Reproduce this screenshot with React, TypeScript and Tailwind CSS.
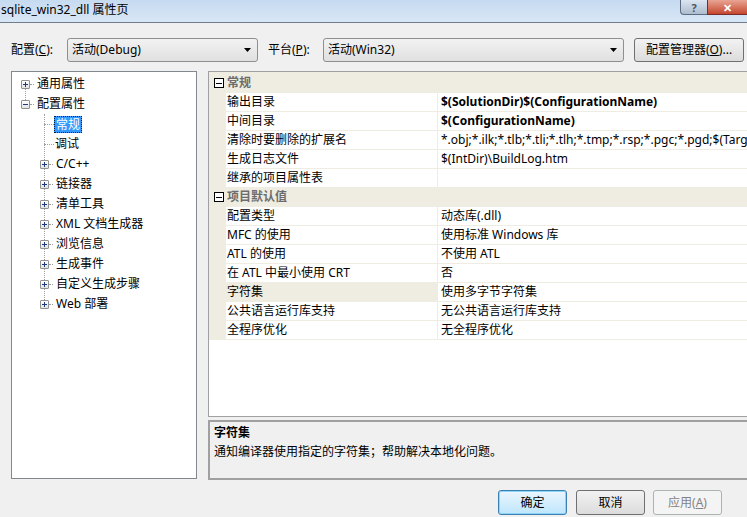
import React from 'react';

const FONT = { fontFamily: '"Noto Sans", "Noto Sans CJK SC", sans-serif' };

/* ------------------------------------------------------------------ */
/* Small pieces                                                        */
/* ------------------------------------------------------------------ */
function TreeBox({ open }: { open?: boolean }) {
  return (
    <span className="relative grid h-[9px] w-[9px] shrink-0 place-items-center rounded-[1px] border border-[#919191] bg-gradient-to-b from-white to-[#e2e2e2]">
      <span className="absolute h-px w-[5px] bg-[#1c3a7a]" />
      {!open && <span className="absolute h-[5px] w-px bg-[#1c3a7a]" />}
    </span>
  );
}

function GridBox() {
  return (
    <span className="relative grid h-[10px] w-[10px] place-items-center border border-black bg-white">
      <span className="h-px w-[6px] bg-black" />
    </span>
  );
}

function DropArrow() {
  return (
    <svg width="7" height="4" viewBox="0 0 7 4" className="shrink-0">
      <path d="M0 0h7L3.5 4z" fill="#000" />
    </svg>
  );
}

function Combo({ text, width }: { text: string; width: string }) {
  return (
    <div
      className={`flex h-[24px] ${width} items-center justify-between rounded-[3px] border border-[#8e8f8f] bg-gradient-to-b from-[#f2f2f2] to-[#e0e0e0] pl-[4px] pr-[6px] text-[12px] text-black`}
    >
      <span>{text}</span>
      <DropArrow />
    </div>
  );
}

/* ------------------------------------------------------------------ */
/* Tree                                                                */
/* ------------------------------------------------------------------ */
const children: { label: string; expandable: boolean; selected?: boolean }[] = [
  { label: '常规', expandable: false, selected: true },
  { label: '调试', expandable: false },
  { label: 'C/C++', expandable: true },
  { label: '链接器', expandable: true },
  { label: '清单工具', expandable: true },
  { label: 'XML 文档生成器', expandable: true },
  { label: '浏览信息', expandable: true },
  { label: '生成事件', expandable: true },
  { label: '自定义生成步骤', expandable: true },
  { label: 'Web 部署', expandable: true },
];

function Tree() {
  return (
    <div className="h-[408px] w-[186px] shrink-0 border border-[#828790] bg-white pt-[2px] text-[12px] text-black">
      <div className="relative">
        {/* link between the two top-level boxes */}
        <span className="absolute left-[13px] top-[15px] h-[11px] border-l border-dotted border-[#a0a0a0]" />
        <div className="flex h-[20px] items-center pl-[9px]">
          <TreeBox />
          <span className="w-[4px] border-t border-dotted border-[#a0a0a0]" />
          <span className="ml-[3px]">通用属性</span>
        </div>
        <div className="flex h-[20px] items-center pl-[9px]">
          <TreeBox open />
          <span className="w-[4px] border-t border-dotted border-[#a0a0a0]" />
          <span className="ml-[3px]">配置属性</span>
        </div>
      </div>

      <div className="relative">
        <span className="absolute left-[32px] top-0 bottom-[10px] border-l border-dotted border-[#a0a0a0]" />
        {children.map((c) => (
          <div key={c.label} className="flex h-[20px] items-center pl-[28px]">
            {c.expandable ? (
              <>
                <TreeBox />
                <span className="w-[4px] border-t border-dotted border-[#a0a0a0]" />
                <span className="ml-[3px]">{c.label}</span>
              </>
            ) : (
              <>
                <span className="ml-[4px] w-[10px] border-t border-dotted border-[#a0a0a0]" />
                <span
                  className={
                    c.selected
                      ? 'border border-dotted border-[#10203a] bg-[#3399ff] px-px leading-[15px] text-white'
                      : 'ml-[1px]'
                  }
                >
                  {c.label}
                </span>
              </>
            )}
          </div>
        ))}
      </div>
    </div>
  );
}

/* ------------------------------------------------------------------ */
/* Property grid                                                       */
/* ------------------------------------------------------------------ */
type Row = { name: string; value: string; bold?: boolean; picked?: boolean };
const sections: { title: string; rows: Row[] }[] = [
  {
    title: '常规',
    rows: [
      { name: '输出目录', value: '$(SolutionDir)$(ConfigurationName)', bold: true },
      { name: '中间目录', value: '$(ConfigurationName)', bold: true },
      {
        name: '清除时要删除的扩展名',
        value: '*.obj;*.ilk;*.tlb;*.tli;*.tlh;*.tmp;*.rsp;*.pgc;*.pgd;$(TargetPath)',
      },
      { name: '生成日志文件', value: '$(IntDir)\\BuildLog.htm' },
      { name: '继承的项目属性表', value: '' },
    ],
  },
  {
    title: '项目默认值',
    rows: [
      { name: '配置类型', value: '动态库(.dll)' },
      { name: 'MFC 的使用', value: '使用标准 Windows 库' },
      { name: 'ATL 的使用', value: '不使用 ATL' },
      { name: '在 ATL 中最小使用 CRT', value: '否' },
      { name: '字符集', value: '使用多字节字符集', picked: true },
      { name: '公共语言运行库支持', value: '无公共语言运行库支持' },
      { name: '全程序优化', value: '无全程序优化' },
    ],
  },
];

function PropertyGrid() {
  return (
    <div className="h-[346px] overflow-hidden border-y border-l border-[#a0a0a0] bg-white text-[12px] text-black">
      {sections.map((s, i) => (
        <div key={s.title}>
          <div
            className={`flex items-center border-b border-[#efece1] bg-[#efece1] ${
              i === 0 ? 'h-[21px] pt-[2px]' : 'h-[19px]'
            }`}
          >
            <span className="flex w-[17px] justify-center pl-[2px]">
              <GridBox />
            </span>
            <span className="pl-[1px] font-bold text-[#6d6d6d]">{s.title}</span>
          </div>
          {s.rows.map((r) => (
            <div key={r.name} className="flex h-[19px]">
              <span className="w-[17px] shrink-0 bg-[#efece1]" />
              <span
                className={`flex w-[212px] shrink-0 items-center border-b border-r border-[#efece1] pl-[1px] ${
                  r.picked ? 'bg-[#efece1]' : ''
                }`}
              >
                {r.name}
              </span>
              <span
                className={`flex flex-1 items-center overflow-hidden whitespace-nowrap border-b border-[#efece1] pl-[3px] ${
                  r.bold ? 'font-bold' : ''
                }`}
              >
                {r.value}
              </span>
            </div>
          ))}
        </div>
      ))}
    </div>
  );
}

function Description() {
  return (
    <div className="mt-[3px] h-[60px] border-y-2 border-l-2 border-[#a0a0a0] bg-[#f0f0f0] pl-[4px] pt-[1px] text-[12px] leading-[19px] text-black">
      <div className="font-bold">字符集</div>
      <div>通知编译器使用指定的字符集；帮助解决本地化问题。</div>
    </div>
  );
}

/* ------------------------------------------------------------------ */
/* Dialog                                                              */
/* ------------------------------------------------------------------ */
export default function App() {
  return (
    <div className="h-[517px] w-[747px] overflow-hidden bg-[#f0f0f0]" style={FONT}>
      {/* Title bar */}
      <div className="flex h-[23px] items-start justify-between border-b border-[#6e7c8b] bg-gradient-to-b from-[#c6daf0] to-[#d9e7f6]">
        <span className="pl-px pt-[2px] text-[12px] leading-[16px] text-black">sqlite_win32_dll 属性页</span>
        <div className="flex">
          <span className="flex h-[15px] w-[27px] items-center justify-center rounded-bl-[4px] border-b border-l border-[#5d6c80] bg-gradient-to-b from-[#dce6f2] to-[#aebccd] text-[11px] font-bold leading-none text-[#4a5564]">
            ?
          </span>
          <span className="flex h-[15px] w-[40px] items-center justify-center border-b border-l border-[#7a2b2b] bg-gradient-to-b from-[#e8a493] to-[#c4442c] text-[11px] font-bold leading-none text-white">
            ✕
          </span>
        </div>
      </div>

      {/* Configuration row */}
      <div className="flex items-center pl-[11px] pt-[15px] text-[12px] text-black">
        <span className="w-[56px]">
          配置(<span className="underline">C</span>):
        </span>
        <Combo text="活动(Debug)" width="w-[191px]" />
        <span className="ml-[10px] w-[55px]">
          平台(<span className="underline">P</span>):
        </span>
        <Combo text="活动(Win32)" width="w-[301px]" />
        <button className="ml-[10px] h-[24px] w-[110px] rounded-[3px] border border-[#707070] bg-gradient-to-b from-[#f2f2f2] to-[#dcdcdc] text-[12px] text-black">
          配置管理器(<span className="underline">O</span>)...
        </button>
      </div>

      {/* Main area */}
      <div className="mt-[9px] flex pl-[11px]">
        <Tree />
        <div className="ml-[11px] flex-1">
          <PropertyGrid />
          <Description />
        </div>
      </div>

      {/* Buttons */}
      <div className="mt-[10px] flex pl-[498px] text-[12px]">
        <button className="h-[25px] w-[69px] rounded-[3px] border border-[#3c7fb1] bg-gradient-to-b from-[#eaf6fd] to-[#bee6fd] text-black shadow-[inset_0_0_0_1px_#90d4f8]">
          确定
        </button>
        <button className="ml-[9px] h-[25px] w-[69px] rounded-[3px] border border-[#707070] bg-gradient-to-b from-[#f2f2f2] to-[#dcdcdc] text-black">
          取消
        </button>
        <button className="ml-[8px] h-[25px] w-[69px] rounded-[3px] border border-[#adb2b5] bg-[#f4f4f4] text-[#838383]">
          应用(<span className="underline">A</span>)
        </button>
      </div>
    </div>
  );
}
